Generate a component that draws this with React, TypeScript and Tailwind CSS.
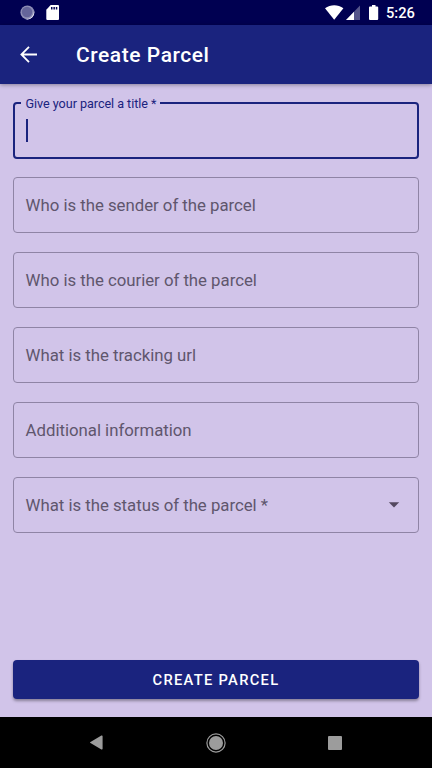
import React from 'react';

function StatusBar() {
  return (
    <div className="flex h-[25px] shrink-0 items-start bg-[#000051] pl-5">
      <svg className="mt-[5px]" width="15" height="15" viewBox="0 0 15 15">
        <circle cx="7.4" cy="7.4" r="7" fill="#8f8fb6" />
        <path d="M14 5.5A7 7 0 0 1 5 14A8 8 0 0 0 14 5.5Z" fill="#f0f0fa" />
        <circle cx="7" cy="7" r="5.2" fill="#65659a" />
      </svg>
      <svg className="ml-[11px] mt-[5px]" width="14" height="16" viewBox="0 0 14 16">
        <path d="M4.7 0H12a1 1 0 0 1 1 1V14a1 1 0 0 1-1 1H1.3a1 1 0 0 1-1-1V4.7Z" fill="#fff" />
        <path d="M5 2H6.5V4.5H5zM7.4 2H8.9V4.5H7.4zM9.8 2H11.3V4.5H9.8z" fill="#000051" />
      </svg>
      <svg className="ml-[265px] mt-[5px]" width="19" height="15" viewBox="0 0 19 15">
        <path d="M0 3.2C5.5-.9 13-.9 18.4 3.2L9.2 14.8Z" fill="#fff" />
      </svg>
      <svg className="ml-[2px] mt-[5px]" width="15" height="15" viewBox="0 0 15 15">
        <path d="M0 15L14 0.5V15Z" fill="#55558a" />
        <path d="M0 15L8 6.8V15Z" fill="#fff" />
      </svg>
      <svg className="ml-2 mt-[5px]" width="10" height="15" viewBox="0 0 10 15">
        <path d="M3 0H6.5V1.5H8.2a1 1 0 0 1 1 1V14a1 1 0 0 1-1 1H1a1 1 0 0 1-1-1V2.5a1 1 0 0 1 1-1H3Z" fill="#fff" />
      </svg>
      <span className="ml-[7px] mt-[4px] text-[14.7px] leading-[19px] font-medium text-white">5:26</span>
    </div>
  );
}

function Field({ label, dropdown = false }: { label: string; dropdown?: boolean }) {
  return (
    <div className="flex h-[56px] items-center justify-between rounded-[4px] border border-[#8f84a5] pt-px pr-[18px] pl-[11.6px] text-[16.8px] leading-[25px] tracking-[-0.02px] text-[#5f566d]">
      <span>{label}</span>
      {dropdown && (
        <svg width="12" height="6" viewBox="0 0 12 6">
          <path d="M.8.3H11.2L6 5.6Z" fill="#54495f" />
        </svg>
      )}
    </div>
  );
}

export default function App() {
  return (
    <div className="flex h-[768px] w-[432px] flex-col overflow-hidden bg-[#d1c4e9] font-['Roboto','Noto_Sans',sans-serif]">
      <StatusBar />
      <header className="flex h-[59px] shrink-0 items-center bg-[#1a237e] pl-5 text-white shadow-[0_1px_4px_rgba(0,0,0,0.35)]">
        <svg width="17" height="17" viewBox="0 0 17 17" fill="none" stroke="#fff" strokeWidth="1.8">
          <path d="M17 8.5H2M9 .8L1.4 8.5L9 16.2" />
        </svg>
        <h1 className="ml-[39px] pt-[2px] text-[21px] font-medium tracking-[0.55px]">Create Parcel</h1>
      </header>
      <main className="flex grow flex-col px-[13px] pt-[10px] pb-[18px]">
        <fieldset className="h-[65px] rounded-[4px] border-2 border-[#1a237e] pl-[6px]">
          <legend className="pt-[2px] pr-[3.5px] pl-[4.5px] text-[12.6px] leading-[16px] tracking-[-0.04px] text-[#1a237e]">Give your parcel a title *</legend>
          <div className="ml-[4.5px] mt-[7px] h-[23px] w-[2px] bg-[#1a237e]" />
        </fieldset>
        <div className="mt-[18.4px] flex flex-col gap-[18.8px]">
          <Field label="Who is the sender of the parcel" />
          <Field label="Who is the courier of the parcel" />
          <Field label="What is the tracking url" />
          <Field label="Additional information" />
          <Field label="What is the status of the parcel *" dropdown />
        </div>
        <button className="mt-auto h-[39px] rounded-[4px] bg-[#1a237e] pt-[2px] text-[14.7px] font-medium tracking-[1.3px] text-white shadow-[0_2px_3px_rgba(0,0,0,0.35)]">
          CREATE PARCEL
        </button>
      </main>
      <nav className="flex h-[51px] shrink-0 items-center bg-black pl-[90px]">
        <svg width="13" height="15" viewBox="0 0 13 15">
          <path d="M12.6 1.2V13.8a.8.8 0 0 1-1.2.6L.5 8.1a.7.7 0 0 1 0-1.2L11.4.6a.8.8 0 0 1 1.2.6Z" fill="#9c9c9c" />
        </svg>
        <svg className="ml-[102.6px]" width="20" height="20" viewBox="0 0 20 20">
          <circle cx="10" cy="10" r="9.1" fill="none" stroke="#9c9c9c" strokeWidth="1.2" />
          <circle cx="10" cy="10" r="7" fill="#9c9c9c" />
        </svg>
        <div className="ml-[102.4px] size-[14px] rounded-[1px] bg-[#9c9c9c]" />
      </nav>
    </div>
  );
}
